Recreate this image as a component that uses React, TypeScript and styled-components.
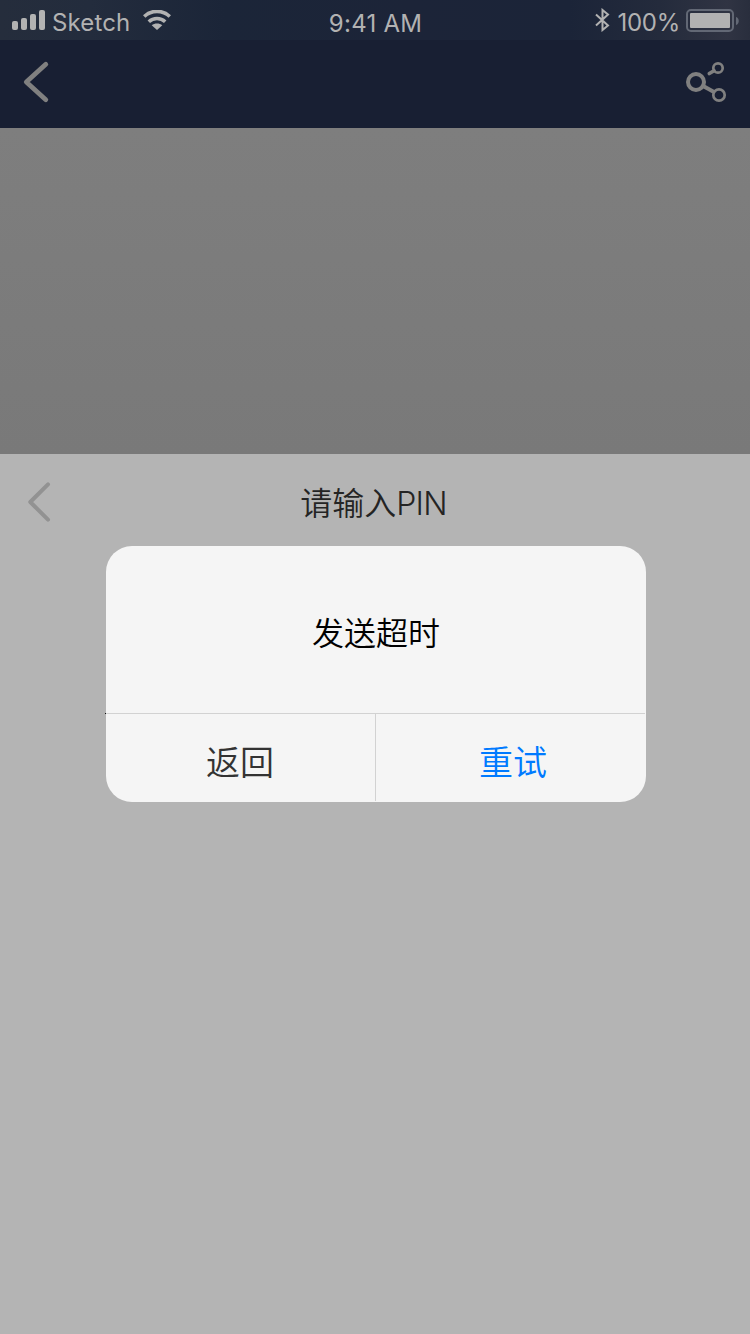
import React from "react";
import styled, { createGlobalStyle } from "styled-components";

const GlobalStyle = createGlobalStyle`
  * { box-sizing: border-box; }
  body { margin: 0; background: #b4b4b4; }
  button { font: inherit; border: 0; padding: 0; background: none; }
  svg { display: block; flex: none; }
`;

const Screen = styled.main`
  position: relative;
  display: flex;
  flex-direction: column;
  width: 750px;
  height: 1334px;
  overflow: hidden;
  background: #b4b4b4;
  font-family: Inter, "Noto Sans CJK SC", sans-serif;
`;

const StatusBar = styled.header`
  display: grid;
  grid-template-columns: 1fr auto 1fr;
  align-items: center;
  height: 40px;
  padding: 0 11px 0 12px;
  background: linear-gradient(90deg, #252d3c 0%, #232c3d 12%, #1b2538 30%, #1c2438 55%, #1b2438 76%, #242b3c 88%, #303443 97%, #292e3d 100%);
  color: #b2b2b2;
  font-size: 24px;
  line-height: 40px;
`;

const StatusGroup = styled.div<{ $end?: boolean }>`
  display: flex;
  align-items: center;
  justify-content: ${(p) => (p.$end ? "flex-end" : "flex-start")};
  height: 40px;
`;

const StatusText = styled.span<{ $spacing: number; $top?: number; $left?: number; $right?: number }>`
  height: 40px;
  padding-top: ${(p) => p.$top ?? 3}px;
  margin-left: ${(p) => p.$left ?? 0}px;
  margin-right: ${(p) => p.$right ?? 0}px;
  letter-spacing: ${(p) => p.$spacing}px;
  white-space: nowrap;
`;

const NavBar = styled.nav`
  display: flex;
  justify-content: space-between;
  align-items: flex-start;
  height: 88px;
  padding: 20px 22px;
  background: #181f33;
`;

const Backdrop = styled.section`
  height: 326px;
  background: linear-gradient(180deg, #7e7e7e, #797979);
`;

const Sheet = styled.section`
  flex: 1;
  background: #b4b4b4;
`;

const SheetHeader = styled.div`
  display: grid;
  grid-template-columns: 60px 1fr 60px;
  height: 92px;
  padding: 26px 26px 0;
`;

const SheetTitle = styled.h1`
  margin: 0;
  padding-right: 3px;
  color: #242424;
  font-size: 32px;
  font-weight: 350;
  line-height: 48px;
  text-align: center;
`;

const Latin = styled.span`
  letter-spacing: -0.7px;
  font-weight: 350;
`;

const Dialog = styled.div`
  position: absolute;
  left: 106px;
  top: 546px;
  display: flex;
  flex-direction: column;
  width: 540px;
  height: 256px;
  border-radius: 26px;
  background: #f5f5f5;
`;

const Message = styled.p`
  margin: 0;
  height: 167px;
  color: #000;
  font-size: 32px;
  font-weight: 350;
  line-height: 176px;
  text-align: center;
`;

const Actions = styled.div`
  display: grid;
  grid-template-columns: 270px 269px;
  height: 88px;
  width: 540px;
  margin-left: -1px;
  border-top: 1px solid #d2d2d2;
`;

const Action = styled.button<{ $primary?: boolean }>`
  && {
    height: 87px;
    padding: 10px 0 0 ${(p) => (p.$primary ? 6 : 0)}px;
    border-left: ${(p) => (p.$primary ? "1px solid #d2d2d2" : "0")};
    color: ${(p) => (p.$primary ? "#007aff" : "#333")};
    font-size: 34px;
    font-weight: 350;
    line-height: 77px;
    text-align: center;
  }
`;

const LineStart = styled.i`
  position: absolute;
  left: -1px;
  top: 167px;
  width: 1px;
  height: 1px;
  background: #111;
`;

const Signal = () => (
  <svg width="34" height="20" viewBox="0 0 34 20" fill="#b2b2b2">
    <rect y="11" width="6" height="9" rx="2" />
    <rect x="9" y="8" width="6" height="12" rx="2" />
    <rect x="18" y="4" width="6" height="16" rx="2" />
    <rect x="27" width="6" height="20" rx="2" />
  </svg>
);

const Wifi = () => (
  <svg width="28" height="20" viewBox="0 0 28 20">
    <g fill="none" stroke="#b2b2b2" strokeWidth="3.6">
      <path d="M1.2 6.500a18.500 18.500 0 0 1 25.600 0" />
      <path d="M5.800 11.700a12 12 0 0 1 16.400 0" />
    </g>
    <path d="M8.700 15.200c3-2.200 7.600-2.200 10.600 0L14 20Z" fill="#b2b2b2" />
  </svg>
);

const Bluetooth = () => (
  <svg width="16" height="24" viewBox="0 0 16 24" fill="none" stroke="#b2b2b2" strokeWidth="2">
    <path d="m1 6.500 12 11-5.500 4.500V2l5.500 4.500-12 11" />
  </svg>
);

const Battery = () => (
  <svg width="53" height="24" viewBox="0 0 53 24">
    <g transform="translate(0 1)">
      <rect x="1" y="1" width="46" height="21" rx="4" fill="none" stroke="#626875" strokeWidth="2" />
      <rect x="4" y="4" width="40" height="15" rx="1" fill="#b2b2b2" />
      <path d="M50 8c3.700 1 3.700 7 0 8Z" fill="#626875" />
    </g>
  </svg>
);

const Chevron = ({ color, width, reach }: { color: string; width: number; reach: number }) => (
  <svg width="28" height="44" viewBox="0 0 28 44" fill="none" stroke={color} strokeWidth={width} strokeLinecap="round" strokeLinejoin="round">
    <path d={`M${reach} 4.300 4.300 22l${reach - 4.3} 17.700`} />
  </svg>
);

const Share = () => (
  <svg width="42" height="44" viewBox="0 0 42 44" fill="none" stroke="#808080">
    <circle cx="10" cy="22" r="8" strokeWidth="4" />
    <circle cx="32" cy="8" r="4.700" strokeWidth="2.700" />
    <circle cx="33" cy="35" r="5.700" strokeWidth="2.700" />
    <path d="m23.300 13.500 4.700-2.800" strokeWidth="3.600" strokeLinecap="round" />
    <path d="m18 26.500 10 5.500" strokeWidth="4" />
  </svg>
);

export default function App() {
  return (
    <>
      <GlobalStyle />
      <Screen>
        <StatusBar>
          <StatusGroup>
            <Signal />
            <StatusText $spacing={0.15} $left={6} $right={13}>Sketch</StatusText>
            <Wifi />
          </StatusGroup>
          <StatusText $spacing={0.25} $top={4}>9:41 AM</StatusText>
          <StatusGroup $end>
            <Bluetooth />
            <StatusText $spacing={-0.25} $left={6} $right={6}>100%</StatusText>
            <Battery />
          </StatusGroup>
        </StatusBar>
        <NavBar>
          <Chevron color="#808080" width={4.8} reach={23.8} />
          <Share />
        </NavBar>
        <Backdrop />
        <Sheet>
          <SheetHeader>
            <Chevron color="#929292" width={4} reach={22} />
            <SheetTitle>请输入<Latin>PIN</Latin></SheetTitle>
          </SheetHeader>
        </Sheet>
        <Dialog role="dialog">
          <Message>发送超时</Message>
          <Actions>
            <Action>返回</Action>
            <Action $primary>重试</Action>
          </Actions>
          <LineStart />
        </Dialog>
      </Screen>
    </>
  );
}
